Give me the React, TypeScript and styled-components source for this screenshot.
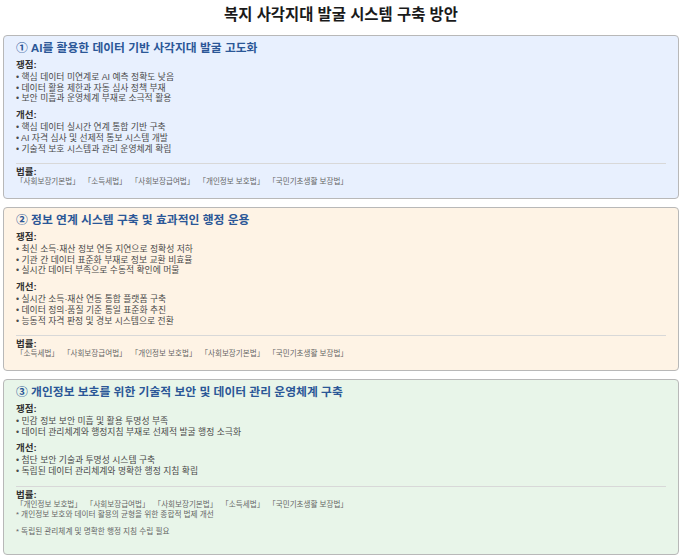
import React from "react";
import styled, { createGlobalStyle } from "styled-components";

const Global = createGlobalStyle`
  html, body { margin: 0; padding: 0; background: #ffffff; }
  body { font-family: "Liberation Sans", "Noto Sans CJK KR", sans-serif; }
`;

const Page = styled.div`
  width: 680px;
  height: 557px;
  overflow: hidden;
  padding: 0 1px 0 3px;
  box-sizing: border-box;
  display: flex;
  flex-direction: column;
`;

const Title = styled.h1`
  margin: 0;
  height: 35px;
  font-size: 15.4px;
  line-height: 29px;
  font-weight: 700;
  text-align: center;
  color: #1a1a1a;
`;

const Cards = styled.div`
  display: flex;
  flex-direction: column;
  gap: 8px;
`;

const Card = styled.section<{ $bg: string; $h: number }>`
  background: ${(p) => p.$bg};
  height: ${(p) => p.$h}px;
  box-sizing: border-box;
  border: 1px solid #b8b8b8;
  border-radius: 4px;
  padding: 3px 12px 0;
`;

const CardTitle = styled.h2`
  margin: 0 0 1px;
  font-size: 11.8px;
  line-height: 18px;
  font-weight: 700;
  color: #2b5797;
`;

const Label = styled.div`
  font-size: 9.5px;
  line-height: 13px;
  margin-bottom: 1px;
  font-weight: 700;
  color: #333333;
`;

const LawLabel = styled.div`
  font-size: 9.5px;
  line-height: 10px;
  font-weight: 700;
  color: #333333;
`;

const List = styled.ul`
  list-style: none;
  margin: 0 0 4px;
  padding: 0;
`;

const Item = styled.li`
  font-size: 8.8px;
  line-height: 10.7px;
  color: #4a4a4a;
`;

const Laws = styled.div`
  border-top: 1px solid #d8d8d8;
  margin-top: 9px;
  padding-top: 3px;
`;

const LawRow = styled.div`
  display: flex;
  gap: 4px;
  font-size: 7.55px;
  line-height: 9.5px;
  color: #666666;
`;

const Note = styled.div<{ $gap?: number }>`
  font-size: 7.65px;
  line-height: 11px;
  color: #666666;
  margin-top: ${(p) => p.$gap ?? 0}px;
`;

const data = [
  {
    bg: "#e8f0fe",
    h: 164,
    title: "① AI를 활용한 데이터 기반 사각지대 발굴 고도화",
    issues: ["핵심 데이터 미연계로 AI 예측 정확도 낮음", "데이터 활용 제한과 자동 심사 정책 부재", "보안 미흡과 운영체계 부재로 소극적 활용"],
    fixes: ["핵심 데이터 실시간 연계 통합 기반 구축", "AI 자격 심사 및 선제적 통보 시스템 개발", "기술적 보호 시스템과 관리 운영체계 확립"],
    laws: ["사회보장기본법", "소득세법", "사회보장급여법", "개인정보 보호법", "국민기초생활 보장법"],
    notes: [] as string[],
  },
  {
    bg: "#fef3e5",
    h: 164,
    title: "② 정보 연계 시스템 구축 및 효과적인 행정 운용",
    issues: ["최신 소득·재산 정보 연동 지연으로 정확성 저하", "기관 간 데이터 표준화 부재로 정보 교환 비효율", "실시간 데이터 부족으로 수동적 확인에 머물"],
    fixes: ["실시간 소득·재산 연동 통합 플랫폼 구축", "데이터 정의·품질 기준 통일 표준화 추진", "능동적 자격 판정 및 경보 시스템으로 전환"],
    laws: ["소득세법", "사회보장급여법", "개인정보 보호법", "사회보장기본법", "국민기초생활 보장법"],
    notes: [] as string[],
  },
  {
    bg: "#e8f5e9",
    h: 176,
    title: "③ 개인정보 보호를 위한 기술적 보안 및 데이터 관리 운영체계 구축",
    issues: ["민감 정보 보안 미흡 및 활용 투명성 부족", "데이터 관리체계와 행정지침 부재로 선제적 발굴 행정 소극화"],
    fixes: ["첨단 보안 기술과 투명성 시스템 구축", "독립된 데이터 관리체계와 명확한 행정 지침 확립"],
    laws: ["개인정보 보호법", "사회보장급여법", "사회보장기본법", "소득세법", "국민기초생활 보장법"],
    notes: ["* 개인정보 보호와 데이터 활용의 균형을 위한 종합적 법제 개선", "* 독립된 관리체계 및 명확한 행정 지침 수립 필요"],
  },
];

export default function App() {
  return (
    <Page>
      <Global />
      <Title>복지 사각지대 발굴 시스템 구축 방안</Title>
      <Cards>
        {data.map((c) => (
          <Card key={c.title} $bg={c.bg} $h={c.h}>
            <CardTitle>{c.title}</CardTitle>
            <Label>쟁점:</Label>
            <List>
              {c.issues.map((t) => (
                <Item key={t}>• {t}</Item>
              ))}
            </List>
            <Label>개선:</Label>
            <List>
              {c.fixes.map((t) => (
                <Item key={t}>• {t}</Item>
              ))}
            </List>
            <Laws>
              <LawLabel>법률:</LawLabel>
              <LawRow>
                {c.laws.map((l) => (
                  <span key={l}>「{l}」</span>
                ))}
              </LawRow>
              {c.notes.map((n, i) => (
                <Note key={n} $gap={i === 0 ? 0 : 6}>
                  {n}
                </Note>
              ))}
            </Laws>
          </Card>
        ))}
      </Cards>
    </Page>
  );
}
